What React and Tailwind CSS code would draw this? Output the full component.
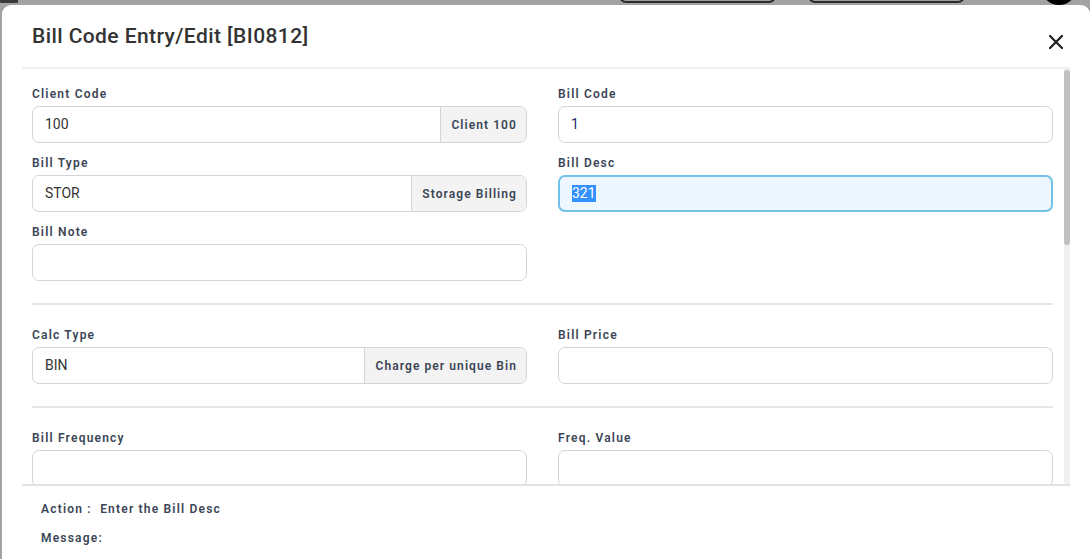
import React from "react";

const font = { fontFamily: "Roboto, 'Liberation Sans', sans-serif" };

function Label({ children }) {
  return (
    <div className="text-[12px] leading-[16px] font-semibold tracking-[0.1em] text-[#3a4556] mb-[4px]">
      {children}
    </div>
  );
}

function Field({ label, value, addon, valueClass = "text-[#333333]", focused, selected }) {
  return (
    <div>
      <Label>{label}</Label>
      <div
        className={
          focused
            ? "flex h-[37px] rounded-[7px] border-2 border-[#70c2e8] bg-[#eef6ff] overflow-hidden"
            : "flex h-[37px] rounded-[7px] border border-[#d1d5db] bg-white overflow-hidden"
        }
      >
        <div className={focused ? "flex-1 flex items-center px-[12px] text-[14px]" : "flex-1 flex items-center px-[12px] text-[14px] " + valueClass}>
          {selected ? (
            <span className="bg-[#3390ff] text-white leading-[17px]">{value}</span>
          ) : (
            value
          )}
        </div>
        {addon && (
          <div className="flex items-center pl-[10px] pr-[9px] bg-[#f3f3f3] border-l border-[#d1d5db] text-[12px] font-semibold tracking-[0.09em] text-[#3a4556] whitespace-nowrap">
            {addon}
          </div>
        )}
      </div>
    </div>
  );
}

export default function App() {
  return (
    <div className="w-[1090px] h-[559px] bg-[#a3a3a3] overflow-hidden" style={font}>
      <div className="h-[5px] overflow-hidden flex items-end">
        <div className="w-[18px] h-[3px] mb-[2px] bg-[#3a3a3a] rounded-b-[1px] shrink-0" />
        <div className="ml-[601px] w-[157px] h-[30px] mb-[2px] shrink-0 rounded-[7px] border-2 border-[#2a2a2a] bg-[#9d9d9d]" />
        <div className="ml-[32px] w-[157px] h-[30px] mb-[2px] shrink-0 rounded-[7px] border-2 border-[#2a2a2a] bg-[#9d9d9d]" />
        <div className="ml-[76px] w-[36px] h-[36px] shrink-0 rounded-full bg-black" />
      </div>
      <div className="ml-[2px] w-[1088px] h-[560px] bg-white rounded-t-[9px] flex flex-col">
        <div className="h-[62px] flex items-start justify-between pl-[30px] pr-[27px]">
          <div className="mt-[18px] text-[21px] leading-[26px] font-medium tracking-[0.02em] text-[#333333]">
            Bill Code Entry/Edit [BI0812]
          </div>
          <svg className="mt-[30px]" width="14" height="14" viewBox="0 0 14 14">
            <path d="M1 1 L13 13 M13 1 L1 13" stroke="#1f1f1f" strokeWidth="2.2" strokeLinecap="square" />
          </svg>
        </div>
        <div className="mx-[20px] border-t-2 border-[#f3eeee] h-[417px] flex">
          <div className="flex-1 overflow-hidden pl-[10px] pr-[11px] pt-[17px]">
            <div className="grid grid-cols-2 gap-x-[31px] gap-y-[12px]">
              <Field label="Client Code" value="100" addon="Client 100" />
              <Field label="Bill Code" value="1" valueClass="text-[#1e2a6e]" />
              <Field label="Bill Type" value="STOR" addon="Storage Billing" />
              <Field label="Bill Desc" value="321" focused selected />
              <Field label="Bill Note" value="" />
              <div />
            </div>
            <div className="h-[2px] bg-[#e6e6e6] mt-[22px] mb-[22px]" />
            <div className="grid grid-cols-2 gap-x-[31px]">
              <Field label="Calc Type" value="BIN" addon="Charge per unique Bin" />
              <Field label="Bill Price" value="" />
            </div>
            <div className="h-[2px] bg-[#e6e6e6] mt-[22px] mb-[22px]" />
            <div className="grid grid-cols-2 gap-x-[31px]">
              <Field label="Bill Frequency" value="" />
              <Field label="Freq. Value" value="" />
            </div>
          </div>
          <div className="w-[6px] bg-[#f0f0f0] flex flex-col">
            <div className="h-[175px] mt-[1px] bg-[#c0c0c0] rounded-[3px]" />
          </div>
        </div>
        <div className="mx-[20px] border-t-2 border-[#e2e2e2] pl-[19px] pt-[15px] flex flex-col gap-[13px] text-[12px] leading-[16px] font-semibold tracking-[0.1em] text-[#3a4556]">
          <div>Action :&nbsp; Enter the Bill Desc</div>
          <div>Message:</div>
        </div>
      </div>
    </div>
  );
}
